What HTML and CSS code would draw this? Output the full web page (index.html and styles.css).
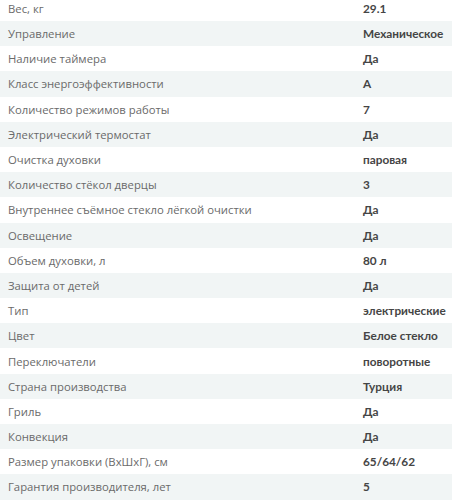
FILE: index.html
```html
<!DOCTYPE html>
<html lang="ru">
<head>
<meta charset="utf-8">
<link rel="stylesheet" href="styles.css">
</head>
<body>
<div class="specs">
  <div class="row"><div class="label">Вес, кг</div><div class="value">29.1</div></div>
  <div class="row"><div class="label">Управление</div><div class="value">Механическое</div></div>
  <div class="row"><div class="label">Наличие таймера</div><div class="value">Да</div></div>
  <div class="row"><div class="label">Класс энергоэффективности</div><div class="value">A</div></div>
  <div class="row"><div class="label">Количество режимов работы</div><div class="value">7</div></div>
  <div class="row"><div class="label">Электрический термостат</div><div class="value">Да</div></div>
  <div class="row"><div class="label">Очистка духовки</div><div class="value">паровая</div></div>
  <div class="row"><div class="label">Количество стёкол дверцы</div><div class="value">3</div></div>
  <div class="row"><div class="label">Внутреннее съёмное стекло лёгкой очистки</div><div class="value">Да</div></div>
  <div class="row"><div class="label">Освещение</div><div class="value">Да</div></div>
  <div class="row"><div class="label">Объем духовки, л</div><div class="value">80 л</div></div>
  <div class="row"><div class="label">Защита от детей</div><div class="value">Да</div></div>
  <div class="row"><div class="label">Тип</div><div class="value">электрические</div></div>
  <div class="row"><div class="label">Цвет</div><div class="value">Белое стекло</div></div>
  <div class="row"><div class="label">Переключатели</div><div class="value">поворотные</div></div>
  <div class="row"><div class="label">Страна производства</div><div class="value">Турция</div></div>
  <div class="row"><div class="label">Гриль</div><div class="value">Да</div></div>
  <div class="row"><div class="label">Конвекция</div><div class="value">Да</div></div>
  <div class="row"><div class="label">Размер упаковки (ВхШхГ), см</div><div class="value">65/64/62</div></div>
  <div class="row"><div class="label">Гарантия производителя, лет</div><div class="value">5</div></div>
</div>
</body>
</html>
```
FILE: styles.css
```css
html, body {
  margin: 0;
  padding: 0;
  background: #ffffff;
  overflow: hidden;
}
.specs {
  margin-top: -4.2px;
  width: 452px;
}
.row {
  display: grid;
  grid-template-columns: 363px 1fr;
  height: 25.2px;
  align-items: center;
  white-space: nowrap;
}
.row:nth-child(even) {
  background: #f1f5f5;
}
.label {
  padding-left: 8px;
  font-family: "Open Sans", sans-serif;
  font-size: 11.3px;
  color: #6a6a6a;
}
.value {
  font-family: Lato, "Open Sans", sans-serif;
  font-weight: 700;
  font-size: 11.8px;
  color: #454545;
}
```
